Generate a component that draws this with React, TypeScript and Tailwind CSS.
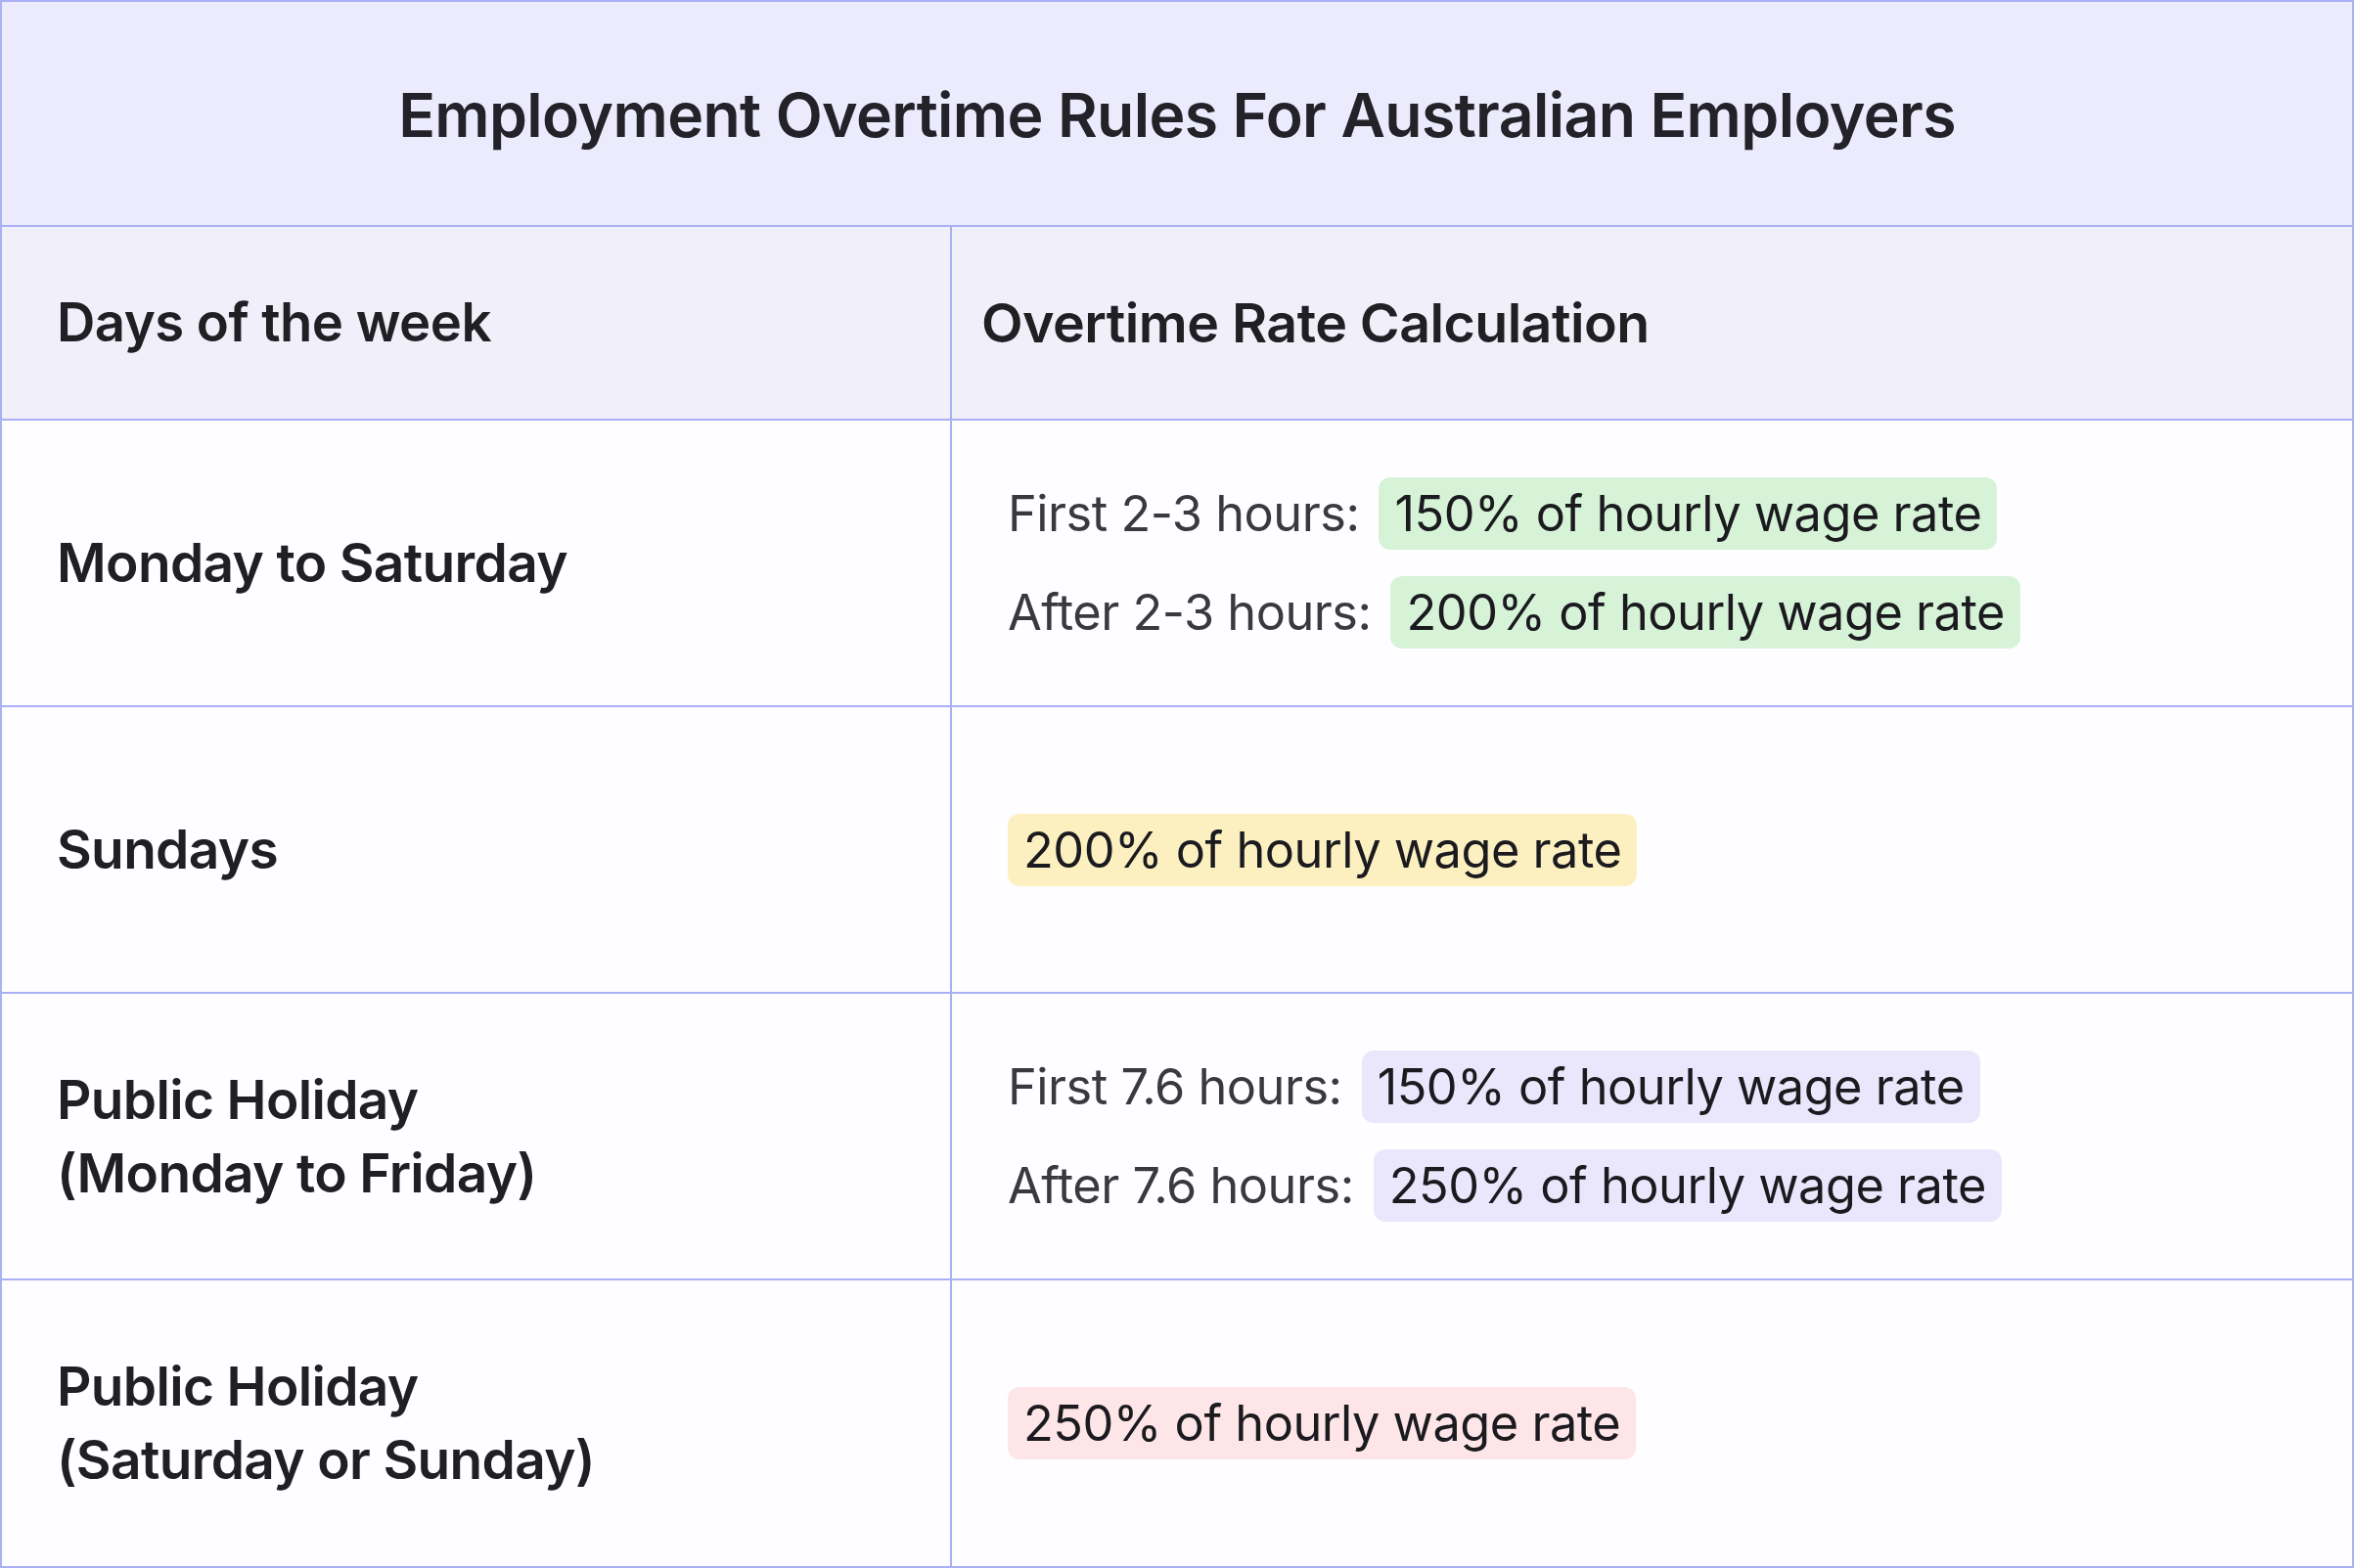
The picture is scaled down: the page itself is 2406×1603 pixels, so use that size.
const rows = [
  {
    day: ["Monday to Saturday"],
    lines: [
      { label: "First 2-3 hours:", value: "150% of hourly wage rate" },
      { label: "After 2-3 hours:", value: "200% of hourly wage rate" },
    ],
    pill: "bg-[#d6f3d8]",
  },
  {
    day: ["Sundays"],
    lines: [{ label: "", value: "200% of hourly wage rate" }],
    pill: "bg-[#fdf0c0]",
  },
  {
    day: ["Public Holiday", "(Monday to Friday)"],
    lines: [
      { label: "First 7.6 hours:", value: "150% of hourly wage rate" },
      { label: "After 7.6 hours:", value: "250% of hourly wage rate" },
    ],
    pill: "bg-[#eae7fc]",
  },
  {
    day: ["Public Holiday", "(Saturday or Sunday)"],
    lines: [{ label: "", value: "250% of hourly wage rate" }],
    pill: "bg-[#fde5e8]",
  },
];

export default function App() {
  return (
    <div className="w-[2406px] h-[1603px] bg-white font-['Inter',sans-serif]">
      <div className="h-full flex flex-col border-2 border-[#a9b1f4] bg-[#fefdff]">
        <div className="h-[230px] shrink-0 flex items-center justify-center bg-[#ebebfd] border-b-2 border-[#a9b1f4]">
          <h1 className="text-[62.5px] font-semibold text-[#222228] tracking-[-0.01em] pt-[4px]">
            Employment Overtime Rules For Australian Employers
          </h1>
        </div>

        <div className="h-[198px] shrink-0 grid grid-cols-[971px_1fr] bg-[#f0effa] border-b-2 border-[#a9b1f4]">
          <div className="flex items-center pl-[56px] border-r-2 border-[#a9b1f4]">
            <span className="text-[54.5px] font-semibold text-[#1f1f24] tracking-[-0.01em]">Days of the week</span>
          </div>
          <div className="flex items-center pl-[30px]">
            <span className="text-[55.5px] font-semibold text-[#1f1f24] tracking-[-0.01em]">Overtime Rate Calculation</span>
          </div>
        </div>

        {rows.map((r, i) => (
          <div
            key={i}
            className={`grid grid-cols-[971px_1fr] ${i < rows.length - 1 ? "h-[293px] border-b-2 border-[#a9b1f4]" : "flex-1"}`}
          >
            <div className="flex flex-col justify-center pl-[56px] border-r-2 border-[#a9b1f4] leading-[75px]">
              {r.day.map((d) => (
                <span key={d} className="text-[55px] font-semibold text-[#1f1f24] tracking-[-0.012em]">
                  {d}
                </span>
              ))}
            </div>
            <div className="flex flex-col justify-center gap-[25px] pl-[57px]">
              {r.lines.map((l) => (
                <div key={l.value} className="flex items-center gap-[20px]">
                  {l.label && (
                    <span className="text-[50.5px] text-[#3a3a3e] tracking-[-0.01em]">{l.label}</span>
                  )}
                  <span
                    className={`${r.pill} h-[74px] flex items-center px-[16px] rounded-[12px] text-[50.5px] text-[#1b1b1f] tracking-[-0.01em]`}
                  >
                    {l.value}
                  </span>
                </div>
              ))}
            </div>
          </div>
        ))}
      </div>
    </div>
  );
}
